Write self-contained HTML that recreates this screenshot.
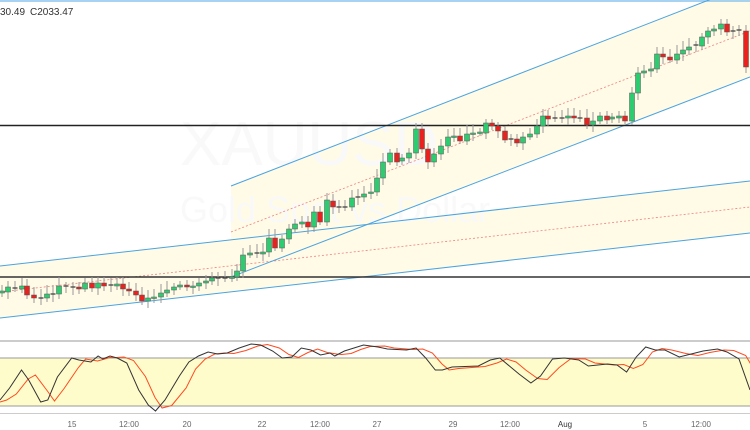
<!DOCTYPE html>
<html><head><meta charset="utf-8"><style>
html,body{margin:0;padding:0;background:#fff;width:750px;height:430px;overflow:hidden;font-family:"Liberation Sans",sans-serif}
svg{display:block}
</style></head><body>
<svg id="s" width="750" height="430" viewBox="0 0 750 430" xmlns="http://www.w3.org/2000/svg">
<rect width="750" height="430" fill="#fff"/>
<polygon points="0,266 750,181 750,233 0,318" fill="#fffbe6"/>
<polygon points="231,186 750,-16 750,77 231,277" fill="#fffbe6"/>
<text x="180" y="165" font-size="62" fill="#f9f9f9" font-family="Liberation Sans,sans-serif">XAUUSD</text>
<text x="180" y="222" font-size="36" fill="#f9f9f9" font-family="Liberation Sans,sans-serif">Gold Spot vs Dollar</text>
<line x1="0" y1="1" x2="750" y2="1" stroke="#8cc4ee" stroke-width="1.5"/>
<line x1="0" y1="266" x2="750" y2="181" stroke="#4aa3e0" stroke-width="1"/>
<line x1="0" y1="318" x2="750" y2="233" stroke="#4aa3e0" stroke-width="1"/>
<line x1="0" y1="292" x2="750" y2="207" stroke="#f08080" stroke-width="0.8" stroke-dasharray="2,2"/>
<line x1="231" y1="186" x2="750" y2="-16" stroke="#4aa3e0" stroke-width="1"/>
<line x1="231" y1="277" x2="750" y2="77" stroke="#4aa3e0" stroke-width="1"/>
<line x1="231" y1="232" x2="750" y2="31" stroke="#f08080" stroke-width="0.8" stroke-dasharray="2,2"/>
<line x1="0" y1="125.5" x2="750" y2="125.5" stroke="#222" stroke-width="1.5"/>
<line x1="0" y1="277" x2="750" y2="277" stroke="#333" stroke-width="1.5"/>
<g id="c"></g>
<text x="0" y="15" font-size="10" fill="#333">30.49</text>
<text x="30" y="15" font-size="10" fill="#333">C2033.47</text>
<line x1="0" y1="341" x2="750" y2="341" stroke="#999" stroke-width="1"/>
<rect x="0" y="358" width="750" height="48" fill="#fffccc"/>
<line x1="0" y1="358" x2="750" y2="358" stroke="#999" stroke-width="1"/>
<line x1="0" y1="406" x2="750" y2="406" stroke="#999" stroke-width="1"/>
<polyline id="rl" fill="none" stroke="#ff4a20" stroke-width="1"/>
<polyline id="bl" fill="none" stroke="#333" stroke-width="1"/>
<line x1="0" y1="413.5" x2="750" y2="413.5" stroke="#ccc" stroke-width="1"/>
<g font-size="8" fill="#666" text-anchor="middle">
<text x="72" y="427">15</text><text x="129" y="427">12:00</text><text x="187" y="427">20</text>
<text x="262" y="427">22</text><text x="320" y="427">12:00</text><text x="377" y="427">27</text>
<text x="453" y="427">29</text><text x="510" y="427">12:00</text><text x="565" y="427" fill="#333">Aug</text>
<text x="645" y="427">5</text><text x="701" y="427">12:00</text>
</g>
</svg>
<script>
var G='#2ecc71',R='#e8221e',N='#555';
var d=[[2,291,293,G],[8,287,292,G],[15,288,289,N],[22,286,289,G],[27,286,295,R],[34,295,298,R],[41,298,299,N],[47,294,298,G],[53,294,295,N],[59,286,294,G],[66,286,287,N],[73,287,288,N],[79,287,289,R],[85,283,289,G],[92,283,288,R],[98,283,288,G],[104,283,286,R],[111,285,286,N],[117,284,286,G],[123,284,289,R],[129,289,291,R],[136,291,295,R],[142,295,301,R],[148,298,301,G],[154,297,298,G],[161,293,297,G],[167,290,293,G],[174,287,290,G],[180,285,287,G],[187,285,287,R],[193,286,287,G],[199,283,286,G],[206,281,283,G],[212,278,281,G],[218,278,279,N],[225,278,279,N],[232,277,278,G],[237,271,277,G],[243,255,271,G],[250,253,255,G],[257,253,254,N],[263,252,254,G],[269,238,252,G],[275,238,248,R],[282,239,248,G],[289,229,239,G],[295,224,229,G],[302,222,224,G],[308,222,227,R],[314,212,227,G],[320,212,222,R],[327,200,222,G],[333,201,207,R],[339,207,208,N],[345,207,208,N],[352,198,207,G],[358,197,198,N],[364,194,197,G],[371,192,193,G],
[377,178,192,G],[383,162,178,G],[390,153,162,G],[397,153,162,R],[402,158,161,G],[409,153,158,G],[416,129,153,G],[422,129,149,R],[428,149,162,R],[434,154,162,G],[441,146,154,G],[448,137,146,G],[454,136,137,G],[460,136,141,R],[467,134,141,G],[473,133,134,G],[480,132,133,G],[486,123,133,G],[492,123,126,R],[498,126,131,R],[505,131,140,R],[511,139,140,N],[517,139,143,R],[523,137,143,G],[530,134,137,G],[537,126,134,G],[543,116,126,G],[548,116,119,R],[555,118,119,N],[562,118,119,N],[568,116,118,G],[574,116,118,R],[580,118,119,N],[587,118,125,R],[593,121,125,G],[600,116,121,G],[607,116,120,R],[612,117,119,G],[619,116,118,G],[625,116,121,R],[632,93,121,G],[638,73,93,G],[644,71,73,G],[651,69,71,G],[657,54,69,G],[663,54,57,R],[670,57,60,R],[677,54,60,G],[683,50,54,G],[689,47,50,G],[696,45,46,N],[702,37,46,G],[708,31,37,G],[714,29,31,G],[721,24,29,G],[727,24,32,R],[733,31,32,N],[739,30,31,N],[746,31,67,R]];
var h='';
d.forEach(function(c){var x=c[0],t=c[1],b=c[2];var wt=t-4-((x*7)%6),wb=b+3+((x*3)%5);
h+='<line x1="'+x+'" y1="'+wt+'" x2="'+x+'" y2="'+wb+'" stroke="#999" stroke-width="1"/>';
var hh=Math.max(b-t,1.5);
if(c[3]==N){h+='<line x1="'+(x-2.5)+'" y1="'+t+'" x2="'+(x+2.5)+'" y2="'+t+'" stroke="#444" stroke-width="1.3"/>';}
else h+='<rect x="'+(x-2.5)+'" y="'+t+'" width="5" height="'+hh+'" fill="'+c[3]+'" stroke="#555" stroke-width="0.5"/>';});
document.getElementById('c').innerHTML=h;
var p=[[0,400],[20,388],[45,370],[60,380],[85,402],[100,400],[120,377],[150,358],[165,360],[190,362],[205,356],[215,359],[230,356],[245,358],[265,363],[290,390],[310,405],[325,411],[345,400],[375,376],[395,362],[415,356],[435,352],[455,354],[475,353],[500,348],[525,344],[545,345],[570,351],[590,358],[610,357],[630,348],[650,350],[670,355],[690,353],[700,356],[720,351],[740,348],[760,345],[790,347],[810,349],[850,350],[870,348],[890,358],[910,370],[925,370],[945,367],[1000,366],[1025,360],[1045,358],[1065,366],[1085,374],[1110,383],[1130,376],[1155,359],[1180,358],[1210,360],[1230,366],[1270,364],[1290,365],[1310,372],[1330,357],[1350,347],[1370,350],[1390,350],[1420,357],[1445,354],[1470,351],[1500,349],[1520,352],[1545,359],[1568,390]];
var k=750/1568;
document.getElementById('bl').setAttribute('points',p.map(function(q){return (q[0]*k).toFixed(1)+','+q[1]}).join(' '));
var r=[];for(var i=0;i<p.length;i++){var a=p[Math.max(i-1,0)][1],b=p[i][1];r.push(((p[i][0]+14)*k).toFixed(1)+','+((a+b)/2).toFixed(1));}
document.getElementById('rl').setAttribute('points','0,402 '+r.join(' '));
</script>
</body></html>
